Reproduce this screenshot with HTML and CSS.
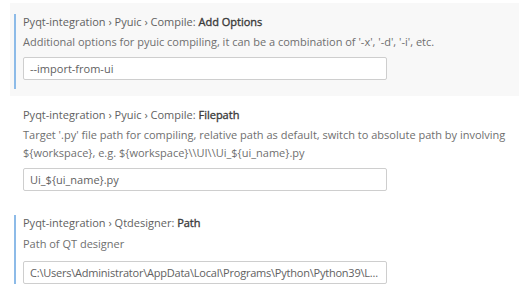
FILE: index.html
```html
<!DOCTYPE html>
<html>
<head>
<meta charset="utf-8">
<link rel="stylesheet" href="styles.css">
</head>
<body>
<div class="list">
  <div class="setting focused">
    <div class="inner modified">
      <div class="title"><span class="cat">Pyqt-integration › Pyuic › Compile: </span><span class="label">Add Options</span></div>
      <div class="desc">Additional options for pyuic compiling, it can be a combination of '-x', '-d', '-i', etc.</div>
      <div class="input">--import-from-ui</div>
    </div>
  </div>
  <div class="setting plain">
    <div class="inner">
      <div class="title"><span class="cat">Pyqt-integration › Pyuic › Compile: </span><span class="label">Filepath</span></div>
      <div class="desc">Target '.py' file path for compiling, relative path as default, switch to absolute path by involving ${workspace}, e.g. ${workspace}\\UI\\Ui_${ui_name}.py</div>
      <div class="input">Ui_${ui_name}.py</div>
    </div>
  </div>
  <div class="setting last">
    <div class="inner modified">
      <div class="title"><span class="cat">Pyqt-integration › Qtdesigner: </span><span class="label">Path</span></div>
      <div class="desc">Path of QT designer</div>
      <div class="input tight">C:\Users\Administrator\AppData\Local\Programs\Python\Python39\L...</div>
    </div>
  </div>
</div>
</body>
</html>
```

FILE: styles.css
```css
html, body {
  margin: 0;
  padding: 0;
  background: #ffffff;
}
body {
  font-family: "Open Sans", "Noto Sans", sans-serif;
  font-size: 11px;
  color: #616161;
}
.list {
  padding-top: 3px;
}
.setting {
  margin-left: 10px;
  padding: 11px 0 7px 4px;
}
.setting.focused {
  background: #f8f8f8;
}
.setting.plain {
  padding-bottom: 4px;
}
.inner {
  border-left: 2px solid transparent;
  padding-left: 7px;
  padding-bottom: 9px;
}
.setting.last .inner {
  padding-bottom: 0;
}
.setting.last .desc {
  margin-top: 4px;
}
.setting.last .input {
  margin-top: 8px;
}
.inner.modified {
  border-left-color: #8dbbe8;
}
.title {
  line-height: 16px;
  height: 16px;
  color: #616161;
  white-space: nowrap;
}
.label {
  font-weight: 400;
  color: #3b3b3b;
  -webkit-text-stroke: 0.35px #3b3b3b;
}
.desc {
  margin-top: 3px;
  line-height: 18px;
  color: #6f6f6f;
  padding-right: 6px;
}
.input {
  margin-top: 6px;
  width: 364px;
  height: 23px;
  box-sizing: border-box;
  border: 1px solid #cecece;
  border-radius: 2px;
  background: #ffffff;
  padding: 0 6px;
  line-height: 21px;
  color: #616161;
  white-space: nowrap;
  overflow: hidden;
}
.input.tight {
  letter-spacing: -0.22px;
}
```
